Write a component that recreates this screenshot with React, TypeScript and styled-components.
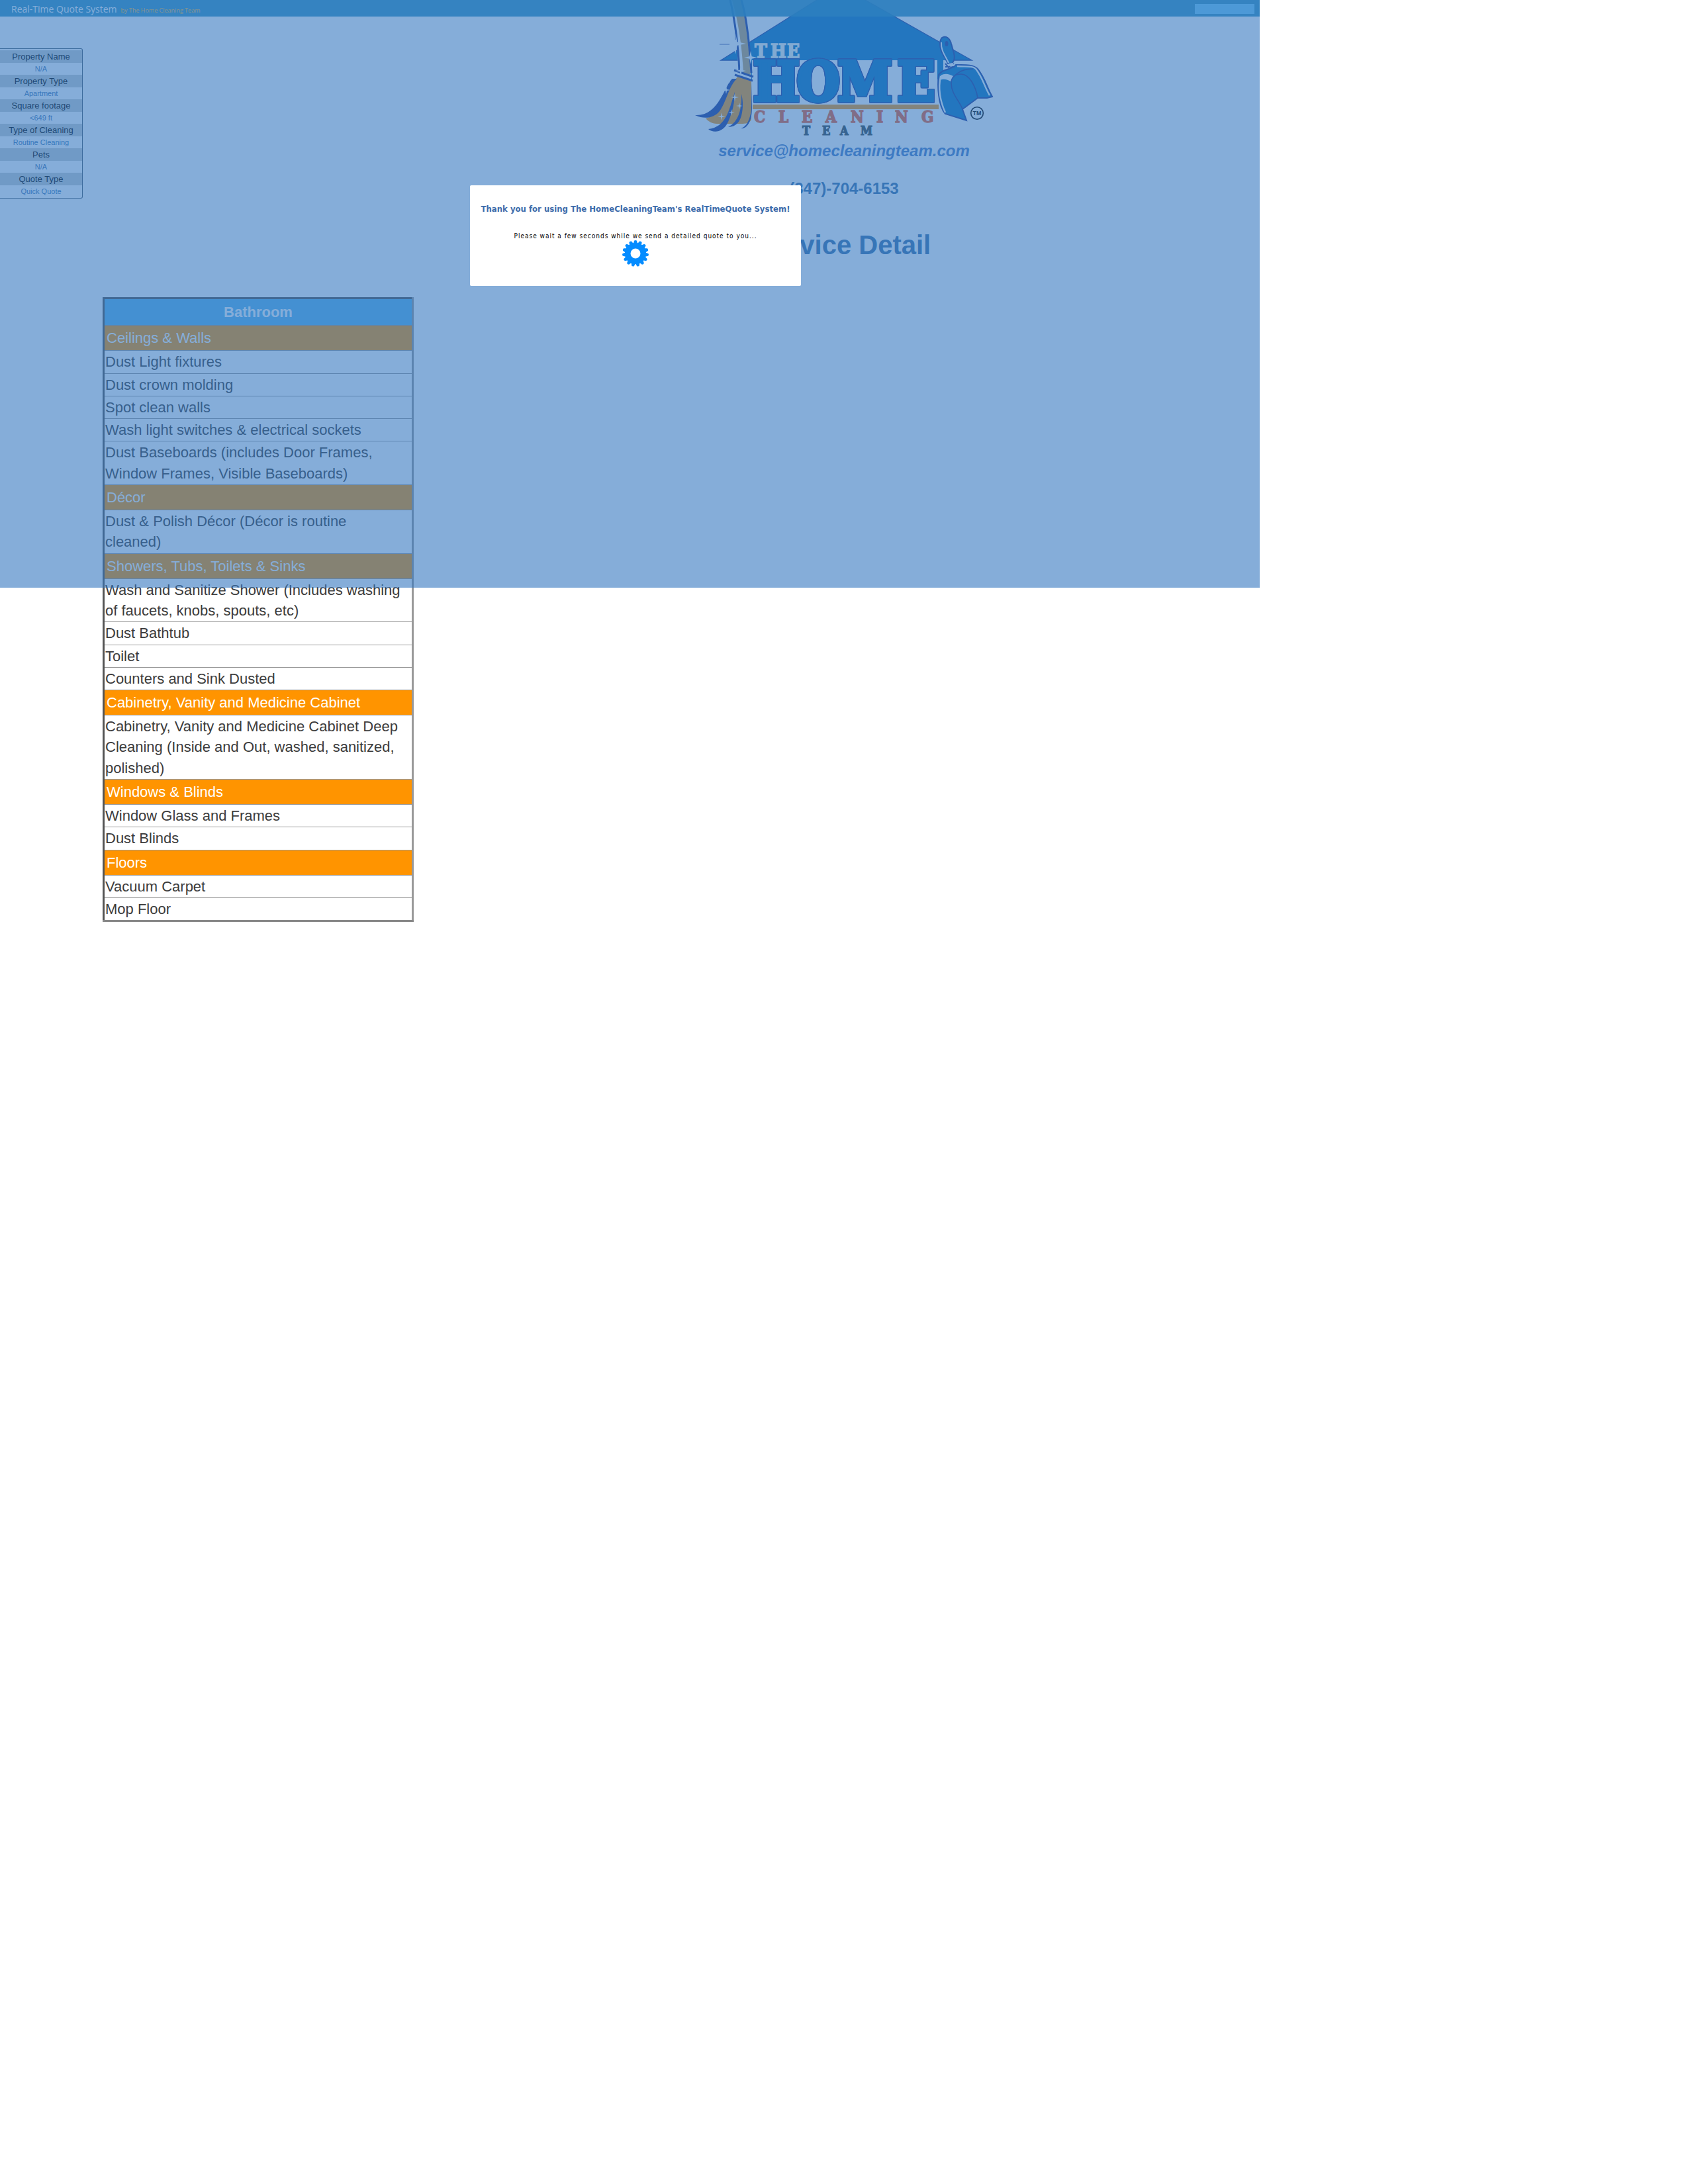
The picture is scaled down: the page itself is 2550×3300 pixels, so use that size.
import React from "react";
import styled, { createGlobalStyle } from "styled-components";

const GlobalStyle = createGlobalStyle`
  body {
    margin: 0;
    background: #fff;
    color: #3c3c3c;
    font-family: "Liberation Sans", Arial, sans-serif;
  }
`;

const Page = styled.div`
  position: relative;
`;

const TopBar = styled.header`
  position: absolute;
  top: 0;
  left: 0;
  z-index: 1;
  box-sizing: border-box;
  display: flex;
  align-items: center;
  justify-content: space-between;
  width: 100%;
  max-width: 1903px;
  height: 25px;
  padding: 2px 8px 0 17px;
  background: rgba(34, 140, 188, 0.9);
  font-family: "Open Sans", sans-serif;
`;

const Brand = styled.div`
  display: flex;
  align-items: baseline;
  gap: 6px;
  padding-top: 2px;
  color: #fff;
  font-size: 14px;
  line-height: 22px;
`;

const Byline = styled.small`
  color: #ffc03c;
  font-size: 9px;
`;

const QuickField = styled.input`
  box-sizing: border-box;
  width: 90px;
  height: 15px;
  padding: 0 4px;
  border: 0;
  background: #73cdfa;
  font-size: 9px;
`;

const Summary = styled.dl`
  position: absolute;
  top: 73px;
  left: 0;
  box-sizing: border-box;
  width: 125px;
  margin: 0;
  padding: 2px 0 1px;
  border: 1px solid #4a5a6a;
  border-left: 0;
  border-radius: 0 3px 3px 0;
  text-align: center;
`;

const Term = styled.dt`
  background: #cbd0d0;
  color: #000;
  font-size: 13px;
  line-height: 19px;
`;

const Detail = styled.dd`
  margin: 0;
  color: #3f79b5;
  font-size: 11px;
  line-height: 18px;
`;

const Masthead = styled.div`
  display: flex;
  flex-direction: column;
  align-items: center;
`;

const HomeWord = styled.text`
  fill: #0a76be;
  stroke: #0a76be;
  stroke-width: 5px;
  filter: drop-shadow(1px 0 0 #233c96) drop-shadow(-1px 0 0 #233c96) drop-shadow(0 1px 0 #233c96)
    drop-shadow(0 -1px 0 #233c96);
`;

const Email = styled.a`
  color: #4d80c7;
  font-size: 24px;
  font-style: italic;
  font-weight: bold;
  line-height: 28px;
  text-decoration: none;
`;

const Phone = styled.p`
  margin: 29px 0 0;
  color: #3c73aa;
  font-size: 24px;
  font-weight: bold;
  line-height: 28px;
`;

const Title = styled.h1`
  margin: 48px 0 0;
  color: #3c73aa;
  font-size: 40px;
  line-height: 46px;
`;

const Tasks = styled.table`
  width: 470px;
  margin: 56px 0 0 155px;
  border: 3px solid;
  border-color: #555 #999 #888 #555;
  border-collapse: collapse;
  font-size: 22px;
  line-height: 1.42;
`;

const RoomHead = styled.th`
  padding: 4px 2px;
  border: 1px solid #999;
  background: #5cb7ed;
  color: #fff;
`;

const SectionHead = styled.th`
  padding: 3px;
  border: 1px solid #999;
  background: #ff9400;
  color: #fff;
  font-weight: normal;
  text-align: left;
`;

const Task = styled.td`
  padding: 1px 10px 1px 1px;
  border: 1px solid #999;
`;

const Overlay = styled.div`
  position: absolute;
  top: 0;
  left: 0;
  z-index: 2;
  box-sizing: border-box;
  display: flex;
  align-items: flex-start;
  justify-content: center;
  width: 100%;
  max-width: 1903px;
  height: 888px;
  padding: 280px 0 0 17px;
  background: rgba(52, 118, 192, 0.6);
`;

const Dialog = styled.div`
  box-sizing: border-box;
  display: flex;
  flex-direction: column;
  align-items: center;
  width: 500px;
  height: 152px;
  padding-top: 28px;
  border-radius: 2px;
  background: #fff;
  font-family: "DejaVu Sans Condensed", "DejaVu Sans", sans-serif;
`;

const DialogTitle = styled.h2`
  margin: 0 0 26px;
  color: #3d6cab;
  font-size: 13px;
  line-height: 16px;
  white-space: nowrap;
`;

const Wait = styled.p`
  margin: 0;
  color: #000;
  font-size: 10px;
  line-height: 13px;
  letter-spacing: 1px;
  white-space: nowrap;
`;

const summary = [
  ["Property Name", "N/A"],
  ["Property Type", "Apartment"],
  ["Square footage", "<649 ft"],
  ["Type of Cleaning", "Routine Cleaning"],
  ["Pets", "N/A"],
  ["Quote Type", "Quick Quote"],
];

const sections = [
  {
    name: "Ceilings & Walls",
    tasks: [
      "Dust Light fixtures",
      "Dust crown molding",
      "Spot clean walls",
      "Wash light switches & electrical sockets",
      "Dust Baseboards (includes Door Frames, Window Frames, Visible Baseboards)",
    ],
  },
  { name: "Décor", tasks: ["Dust & Polish Décor (Décor is routine cleaned)"] },
  {
    name: "Showers, Tubs, Toilets & Sinks",
    tasks: [
      "Wash and Sanitize Shower (Includes washing of faucets, knobs, spouts, etc)",
      "Dust Bathtub",
      "Toilet",
      "Counters and Sink Dusted",
    ],
  },
  {
    name: "Cabinetry, Vanity and Medicine Cabinet",
    tasks: [
      "Cabinetry, Vanity and Medicine Cabinet Deep Cleaning (Inside and Out, washed, sanitized, polished)",
    ],
  },
  { name: "Windows & Blinds", tasks: ["Window Glass and Frames", "Dust Blinds"] },
  { name: "Floors", tasks: ["Vacuum Carpet", "Mop Floor"] },
];

const star = (x: number, y: number, r: number) => {
  const k = r / 6;
  return `M${x} ${y - r}L${x + k} ${y - k}L${x + r} ${y}L${x + k} ${y + k}L${x} ${y + r}L${x - k} ${y + k}L${x - r} ${y}L${x - k} ${y - k}Z`;
};

const slab = '"DejaVu Serif Condensed", "DejaVu Serif", serif';

function Logo() {
  return (
    <svg width="470" height="214" viewBox="0 0 470 214" role="img" aria-label="The Home Cleaning Team" fontFamily={slab} fontWeight="bold">
      {/* roof */}
      <path d="M49 91L194 0H267L428 91H385V120H95V91Z" fill="#0a76be" />
      <path d="M75 91H49L194 0M267 0L428 91H398" fill="none" stroke="#233c96" strokeWidth="1.3" />
      <path d="M96 91H376V154H96Z" fill="#fff" />
      <HomeWord x="98 164 226 316" y="152" fontSize="82">HOME</HomeWord>
      <path d="M97 158H378V165H97Z" fill="#f79919" />
      <text x="100 124 149" y="87" fontSize="28" fill="#f8f8ee" stroke="#f8f8ee" strokeWidth="1.4">THE</text>
      <text x="99 136 171 207 245 284 312 352" y="185" fontSize="24" fill="#f25f32" stroke="#f25f32" strokeWidth="1.4">CLEANING</text>
      <text x="172 202 229 260" y="204" fontSize="18" fill="#3c494b" stroke="#3c494b" strokeWidth="1.2">TEAM</text>

      {/* broom */}
      <path d="M62 0H81C88 32 93 65 95 113L75 111C75 75 71 32 62 0Z" fill="#fff" />
      <path d="M66 0H80C88 32 91 70 94 113L83 110C81 72 76 35 66 0Z" fill="#c3a46c" />
      <path d="M63 0C70 30 75 65 77 108M80 0C89 30 92 70 95 110" fill="none" stroke="#233c96" strokeWidth="3" />
      <path d="M75 115L95 123V180C93 188 82 187 75 187H43C35 187 30 183 26 179C48 175 58 133 75 115Z" fill="#f79919" />
      <path d="M69 106L98 116M70 113L97 122" stroke="#233c96" strokeWidth="3" />
      <path d="M66 119C54 130 46 176 10 174C25 181 39 178 47 168C57 155 61 130 73 119Z" fill="#233c96" />
      <path d="M70 139C61 167 57 192 30 195C38 202 53 200 60 184C67 169 70 153 70 139ZM80 142C81 164 76 184 60 192C72 192 79 183 81 170C83 159 82 150 80 142ZM95 125V166C93 180 88 192 79 194C90 195 96 181 96 163Z" fill="#233c96" />
      <path d={[star(71, 66, 16), star(94, 87, 10), star(79, 107, 8), star(62, 118, 8), star(57, 136, 6), star(70, 147, 6), star(77, 160, 5), star(65, 170, 5), star(50, 176, 6)].join("")} fill="#fff" />
      <path d="M47 67H62M71 49V60" stroke="#233c96" strokeWidth="0.8" />

      {/* dustpan */}
      <path d="M383 57C389 53 395 58 397 66L401 80C403 88 401 93 398 96L392 96C386 84 380 77 380 67C380 62 381 59 383 57Z" fill="#0a76be" stroke="#233c96" strokeWidth="2" />
      <path d="M382 64C381 76 388 84 393 95" fill="none" stroke="#fff" strokeWidth="2" />
      <ellipse cx="390" cy="66" rx="2.5" ry="4" fill="#233c96" />
      <path d="M378 113C384 103 398 106 404 98C419 98 429 97 437 104C449 119 450 131 459 146L451 148H437L414 165C416 171 418 176 420 182L388 172C377 160 376 129 378 113Z" fill="#0a76be" stroke="#233c96" strokeWidth="2" />
      <path d="M381 115C376 139 383 159 388 170M406 100C419 101 429 99 434 104C445 118 447 131 455 144" fill="none" stroke="#fff" strokeWidth="2.4" />
      <path d="M381 114C388 110 394 112 400 115L396 123C389 119 385 119 380 121Z" fill="#fff" />
      <path d="M437 148C434 130 424 112 412 112C401 112 397 118 397 126C397 142 410 153 414 165M400 117C407 108 417 104 430 104" fill="none" stroke="#233c96" strokeWidth="1.6" />
      <path d="M388 96L393 102L401 96M388 101H402" fill="none" stroke="#233c96" strokeWidth="2" />
      <path d="M393 96L399 95L402 99L396 101Z" fill="#fff" />

      <circle cx="436" cy="171" r="9.3" fill="none" stroke="#000" strokeWidth="1.6" />
      <text x="436" y="174" fontSize="9" textAnchor="middle" fontFamily='"Liberation Sans", sans-serif'>TM</text>
    </svg>
  );
}

const teeth = Array.from({ length: 15 }, (_, i) => i * 24);

function Gear() {
  return (
    <svg width="40" height="40" viewBox="-20 -20 40 40" role="img" aria-label="Sending">
      <g fill="#048cff">
        {teeth.map((angle) => (
          <path key={angle} d="M-3.2 -15L-1.8 -19.4Q0 -20.6 1.8 -19.4L3.2 -15Z" transform={`rotate(${angle})`} />
        ))}
      </g>
      <circle r="11.8" fill="none" stroke="#048cff" strokeWidth="8.6" />
    </svg>
  );
}

export default function App() {
  return (
    <Page>
      <GlobalStyle />
      <TopBar>
        <Brand>
          Real-Time Quote System <Byline>by The Home Cleaning Team</Byline>
        </Brand>
        <QuickField aria-label="Quote lookup" />
      </TopBar>

      <main>
        <Masthead>
          <Logo />
          <Email href="mailto:service@homecleaningteam.com">service@homecleaningteam.com</Email>
          <Phone>(347)-704-6153</Phone>
          <Title>Service Detail</Title>
        </Masthead>

        <Tasks>
          <thead>
            <tr>
              <RoomHead scope="col">Bathroom</RoomHead>
            </tr>
          </thead>
          {sections.map((section) => (
            <tbody key={section.name}>
              <tr>
                <SectionHead scope="rowgroup">{section.name}</SectionHead>
              </tr>
              {section.tasks.map((task) => (
                <tr key={task}>
                  <Task>{task}</Task>
                </tr>
              ))}
            </tbody>
          ))}
        </Tasks>
      </main>

      <Summary>
        {summary.map(([term, value]) => (
          <React.Fragment key={term}>
            <Term>{term}</Term>
            <Detail>{value}</Detail>
          </React.Fragment>
        ))}
      </Summary>

      <Overlay>
        <Dialog role="dialog" aria-labelledby="dialog-title">
          <DialogTitle id="dialog-title">Thank you for using The HomeCleaningTeam's RealTimeQuote System!</DialogTitle>
          <Wait>Please wait a few seconds while we send a detailed quote to you...</Wait>
          <Gear />
        </Dialog>
      </Overlay>
    </Page>
  );
}
